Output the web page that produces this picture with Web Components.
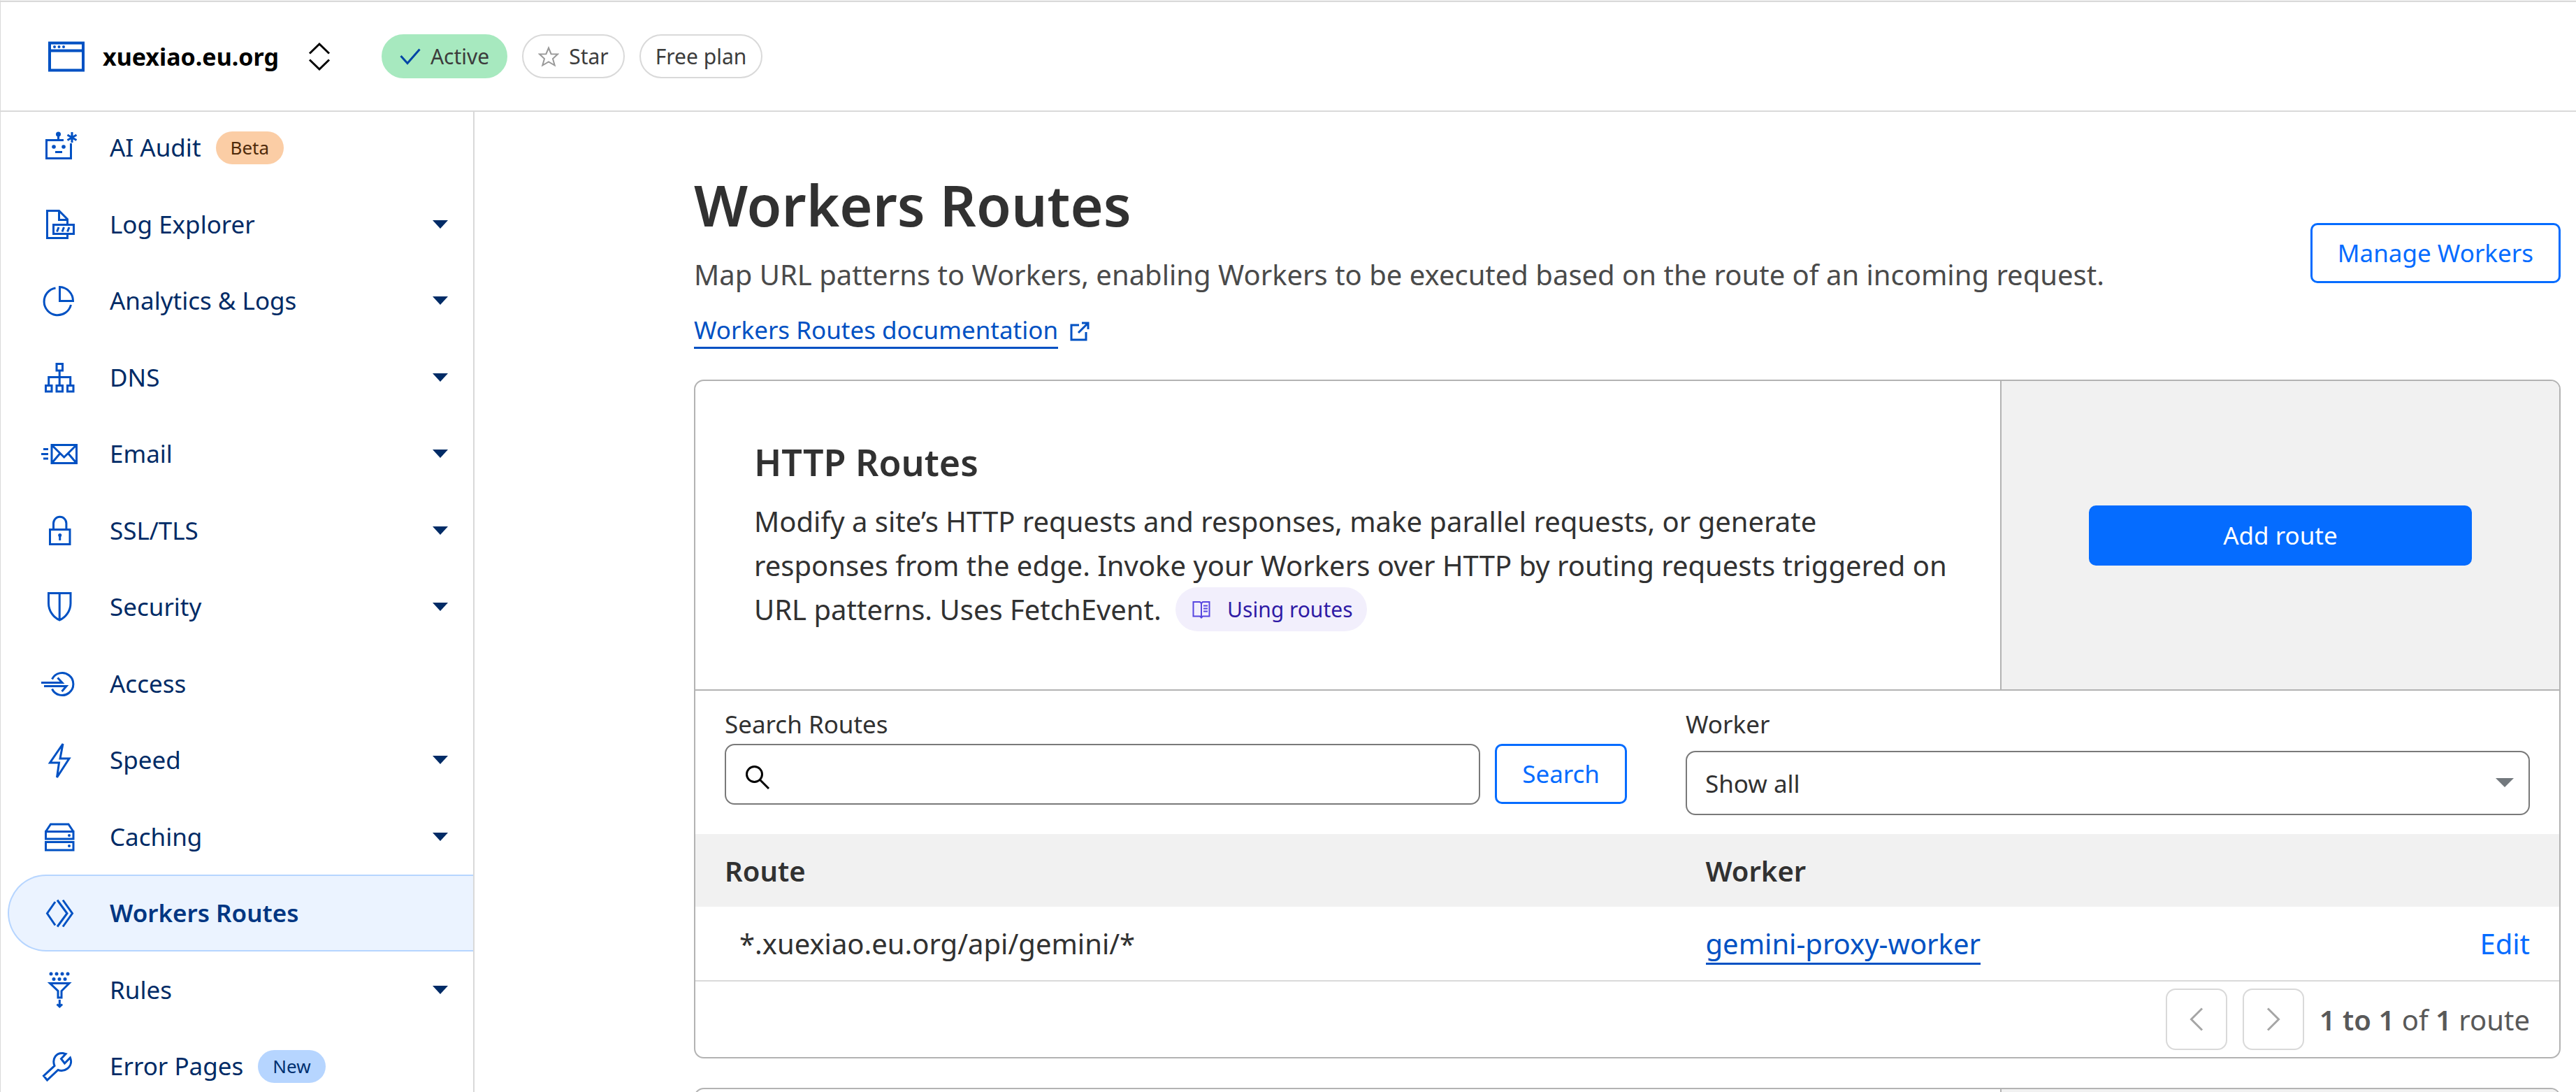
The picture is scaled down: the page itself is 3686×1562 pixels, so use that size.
<!DOCTYPE html>
<html lang="en">
<head>
<meta charset="utf-8">
<title>Workers Routes</title>
<style>
  html, body { margin: 0; height: 100%; }
  body {
    font-family: "Noto Sans", "Open Sans", sans-serif;
    font-size: 35px;
    color: #313131;
    background: #fff;
    overflow: hidden;
    --line: #d9d9d9;
    --card-line: #b3b3b3;
    --field-line: #797979;
    --fill: #f1f1f1;
    --link: #0051c3;
    --action: #056cff;
    --navy: #002b66;
  }
</style>
</head>
<body>
<dash-app>
  <site-header slot="header"></site-header>
  <side-nav slot="nav">
    <nav-item icon="robot">AI Audit<nav-badge slot="badge" tone="beta">Beta</nav-badge></nav-item>
    <nav-item icon="log" expandable>Log Explorer</nav-item>
    <nav-item icon="pie" expandable>Analytics &amp; Logs</nav-item>
    <nav-item icon="dns" expandable>DNS</nav-item>
    <nav-item icon="email" expandable>Email</nav-item>
    <nav-item icon="lock" expandable>SSL/TLS</nav-item>
    <nav-item icon="shield" expandable>Security</nav-item>
    <nav-item icon="access">Access</nav-item>
    <nav-item icon="bolt" expandable>Speed</nav-item>
    <nav-item icon="caching" expandable>Caching</nav-item>
    <nav-item icon="workers" active>Workers Routes</nav-item>
    <nav-item icon="rules" expandable>Rules</nav-item>
    <nav-item icon="wrench">Error Pages<nav-badge slot="badge" tone="new">New</nav-badge></nav-item>
  </side-nav>
  <page-heading>
    <span slot="title">Workers Routes</span>
    <span slot="text">Map URL patterns to Workers, enabling Workers to be executed based on the route of an incoming request.</span>
    <span slot="link">Workers Routes documentation</span>
    <action-button slot="action">Manage Workers</action-button>
  </page-heading>
  <route-card>
    <card-intro>
      <span slot="title">HTTP Routes</span>
      <span slot="text">Modify a site’s HTTP requests and responses, make parallel requests, or generate responses from the edge. Invoke your Workers over HTTP by routing requests triggered on URL patterns. Uses FetchEvent.</span>
      <doc-pill slot="doc">Using routes</doc-pill>
      <action-button slot="action" primary>Add route</action-button>
    </card-intro>
    <route-filters></route-filters>
    <route-table></route-table>
    <page-nav></page-nav>
  </route-card>
  <route-card>
    <card-intro></card-intro>
  </route-card>
</dash-app>

<script>
const ICONS = {
  robot: '<path d="M34 17.500H9.500V43.500H44.500V22M26.500 17V10M46 6v15M39.500 10l13 7.500M39.500 17.500l13-7.500M22 34.500h10"/><g fill="currentColor" stroke="none"><circle cx="26.500" cy="9" r="3.500"/><circle cx="20" cy="27" r="2.800"/><circle cx="34" cy="27" r="2.800"/></g>',
  log: '<path d="M39.500 27V20.500L27.500 8.500H10.500V47.500H39.500V42M27.500 8.500V21.500H39.500"/><path d="M19.500 28.500H48.500V41.500H19.500z"/><path d="M27 32l-2.500 6.500M34.500 32L32 38.500M42 32l-2.500 6.500"/>',
  pie: '<path d="M22.500 10A19.500 19.500 0 1 0 44.500 34"/><path d="M28.500 8.500A20 20 0 0 1 47.500 28.500H28.500z"/>',
  dns: '<path d="M24 8.500h8.500v9.500H24zM8.500 39.500H17V48H8.500zM24 39.500h8.500V48H24zM39.500 39.500H48V48H39.500zM28.200 18v21M12.700 39V27.500H43.700V39"/>',
  email: '<path d="M17 15.500H52.500V41.500H17zM17 15.500L34.700 33L52.500 15.500M17 41.500L29 27.500M52.500 41.500L40.500 27.500M5 21.500h7M2 28.500h10M5 35h7"/>',
  lock: '<path d="M14.500 26.500H43V47.500H14.500zM19.500 26V17.500a9.200 9.200 0 0 1 18.400 0V26M28.700 35v7"/><circle cx="28.700" cy="34.500" r="2.500" fill="currentColor" stroke="none"/>',
  shield: '<path d="M12.500 8.500H44V23C44 34 37 43 28.200 47C19.500 43 12.500 34 12.500 23zM28.200 8.500V47"/>',
  access: '<path d="M17.500 21.500A16 16 0 1 1 17.500 35.500"/><path d="M2 26.500H32L25.500 19.500M6 31.500H38L31.500 39"/>',
  bolt: '<path d="M33 5L29 26H42L24.500 53L27.500 32H14.500z"/>',
  caching: '<path d="M8.500 20.500H48V31H8.500zM8.500 20.500L15.500 10H41L48 20.500M8.500 35.500H48V47H8.500z"/><g fill="currentColor" stroke="none"><circle cx="42" cy="26" r="2"/><circle cx="42" cy="41" r="2"/></g>',
  workers: '<path d="M22 12L10.500 28.500L22 45.500M25 9.500L39 28.500L25 47.500M33 9.500L46.500 28.500L33 47.500"/>',
  rules: '<g fill="currentColor" stroke="none"><circle cx="16" cy="5" r="2.500"/><circle cx="24" cy="5" r="2.500"/><circle cx="32" cy="5" r="2.500"/><circle cx="40" cy="5" r="2.500"/><circle cx="20" cy="12.500" r="2.500"/><circle cx="28" cy="12.500" r="2.500"/><circle cx="36" cy="12.500" r="2.500"/></g><path d="M14.500 18.500H42L31 29.500V39H26V29.500zM28.300 42v9M24.500 48.500l3.800 3.500l3.800-3.500"/>',
  wrench: '<path d="M10.500 48L5.500 42L21 27.500C17 17 24 8.500 33 9.500L37 10.500L30.500 17.500L35.500 24L43.500 16C46 22 44 28 39.500 31.500C35.500 34.500 30 35 26 33.500z"/>'
};

function define(name, css, html, ready) {
  const template = document.createElement("template");
  customElements.define(name, class extends HTMLElement {
    constructor() {
      super();
      this.attachShadow({ mode: "open" });
    }
    connectedCallback() {
      if (this.shadowRoot.childNodes.length) return;
      template.innerHTML = `<style>*{box-sizing:border-box}a{text-decoration:none;color:inherit}button,input,select{font:inherit;margin:0}svg{display:block;fill:none;stroke:currentColor}${css}</style>${html}`;
      this.shadowRoot.append(template.content.cloneNode(true));
      if (ready) ready(this, this.shadowRoot);
    }
  });
}

define("dash-app", `
  :host { display: flex; flex-direction: column; height: 100vh; border-top: 1px solid #f4f4f4; border-left: 1px solid var(--line); box-sizing: border-box; overflow: hidden; }
  .body { display: flex; flex: 1; min-height: 0; }
  main { flex: 1; min-width: 0; padding: 64px 22px 0 314px; overflow: hidden; }
`, `
  <slot name="header"></slot>
  <div class="body"><slot name="nav"></slot><main><slot></slot></main></div>
`);

define("site-header", `
  :host { display: block; flex: none; border-top: 2px solid var(--line); border-bottom: 2px solid var(--line); }
  header { display: flex; align-items: center; height: 155px; padding: 0 68px; }
  .site { display: flex; align-items: center; gap: 26px; color: var(--link); }
  h2 { margin: 0; font-size: 34px; line-height: 48px; font-weight: 700; color: #000; }
  .switch { border: 0; padding: 0; background: none; color: #000; margin-left: 42px; }
  .pills { display: flex; gap: 21px; margin-left: 73px; }
  .check { color: #0045a6; }
  .star { color: #999; }
`, `
  <header>
    <div class="site">
      <svg width="52" height="44" viewBox="0 0 52 44" stroke-width="4"><path d="M2 2.500h48v39H2zM2 13.500h48"/><g fill="currentColor" stroke="none"><circle cx="9" cy="8" r="2"/><circle cx="15.500" cy="8" r="2"/><circle cx="22" cy="8" r="2"/></g></svg>
      <h2>xuexiao.eu.org</h2>
    </div>
    <button class="switch" aria-label="Switch site"><svg width="32" height="40" viewBox="0 0 32 40" stroke-width="3"><path d="M2 15.500L16 2L30 15.500M2 24.500L16 38L30 24.500"/></svg></button>
    <div class="pills">
      <status-pill tone="active"><svg slot="icon" class="check" width="30" height="24" viewBox="0 0 30 24" stroke-width="3"><path d="M1.500 11L11 21.500L28.500 1.500"/></svg>Active</status-pill>
      <status-pill><svg slot="icon" class="star" width="30" height="30" viewBox="0 0 30 30" stroke-width="2"><path d="M15 2.500l3.600 8.700l9.400.3l-7 6.500l2.700 9.500L15 22.500l-8.700 5l2.700-9.500l-7-6.500l9.400-.3z"/></svg>Star</status-pill>
      <status-pill>Free plan</status-pill>
    </div>
  </header>
`);

define("status-pill", `
  :host { display: flex; align-items: center; gap: 14px; height: 63px; padding: 0 21px; box-sizing: border-box; border: 2px solid var(--line); border-radius: 32px; font-size: 30px; line-height: 42px; color: #3c3c3c; }
  :host([tone=active]) { background: #a7e9bf; border-color: #a7e9bf; padding: 0 24px; }
`, `<slot name="icon"></slot><span><slot></slot></span>`);

define("side-nav", `
  :host { display: block; flex: none; width: 678px; box-sizing: border-box; border-right: 2px solid var(--line); overflow: hidden; }
  nav { display: flex; flex-direction: column; margin-top: -4px; }
  ::slotted(nav-item) { height: 109px; }
  ::slotted(nav-item:nth-child(odd)) { height: 110px; }
`, `<nav aria-label="Site"><slot></slot></nav>`);

define("nav-item", `
  :host { display: block; flex: none; color: var(--navy); padding-left: 10px; box-sizing: border-box; }
  a { display: flex; align-items: center; height: 100%; padding: 0 36px 0 44px; border: 2px solid transparent; border-right: 0; border-radius: 55px 0 0 55px; line-height: 48px; }
  .icon { color: var(--link); margin-right: 44px; }
  .arrow { margin-left: auto; fill: currentColor; stroke: none; }
  ::slotted(nav-badge) { margin-left: 21px; }
  :host([active]) { color: #003682; font-weight: 600; }
  :host([active]) a { background: #ebf3ff; border-color: #b6d5ff; }
`, `<a href="#"><svg class="icon" width="56" height="56" viewBox="0 0 56 56" stroke-width="3"></svg><span><slot></slot></span><slot name="badge"></slot></a>`,
(host, root) => {
  root.querySelector("svg").innerHTML = ICONS[host.getAttribute("icon")];
  if (host.hasAttribute("expandable")) {
    root.querySelector("a").insertAdjacentHTML("beforeend", '<svg class="arrow" width="22" height="12" viewBox="0 0 22 12"><path d="M0 0h22L11 12z"/></svg>');
  }
});

define("nav-badge", `
  :host { display: block; padding: 0 21px; border-radius: 24px; font-size: 26px; line-height: 47px; }
  :host([tone=beta]) { background: #fbcda5; color: #4f2a0a; }
  :host([tone=new]) { background: #b6d5ff; color: #003070; }
`, `<slot></slot>`);

define("action-button", `
  :host { display: block; }
  button { display: block; width: 100%; height: 86px; padding: 0 36px; border: 3px solid var(--action); border-radius: 10px; background: #fff; color: var(--action); font-size: 35px; line-height: 48px; white-space: nowrap; cursor: pointer; }
  :host([primary]) button { background: var(--action); color: #fff; }
`, `<button type="button"><slot></slot></button>`);

define("page-heading", `
  :host { display: block; margin-bottom: 44px; }
  header { display: flex; align-items: center; justify-content: space-between; }
  .copy { padding-top: 17px; }
  h1 { margin: 0; font-size: 81px; line-height: 104px; font-weight: 600; }
  p { margin: 16px 0 0; font-size: 40px; line-height: 63px; color: #4a4a4a; }
  .doc { display: flex; align-items: center; gap: 17px; margin-top: 24px; color: var(--link); width: max-content; }
  .doc span { line-height: 48px; border-bottom: 3px solid; }
`, `
  <header>
    <div class="copy">
      <h1><slot name="title"></slot></h1>
      <p><slot name="text"></slot></p>
      <a class="doc" href="#"><span><slot name="link"></slot></span><svg width="28" height="28" viewBox="0 0 28 28" stroke-width="3"><path d="M13 5H2V26H23V15M12 16L26 2M17 2H26V11"/></svg></a>
    </div>
    <slot name="action"></slot>
  </header>
`);

define("route-card", `
  :host { display: block; border: 2px solid var(--card-line); border-radius: 14px; margin-bottom: 42px; overflow: hidden; }
`, `<slot></slot>`);

define("card-intro", `
  :host { display: grid; grid-template-columns: 7fr 3fr; min-height: 443px; box-sizing: border-box; border-bottom: 2px solid var(--card-line); }
  .copy { padding: 83px 64px 83px 84px; }
  h3 { margin: 0; font-size: 52px; line-height: 66px; font-weight: 600; }
  p { margin: 20px 0 0; font-size: 40px; line-height: 63px; }
  .side { display: flex; align-items: center; padding: 0 125px; background: var(--fill); border-left: 2px solid var(--card-line); }
  ::slotted(action-button) { flex: 1; }
`, `
  <div class="copy"><h3><slot name="title"></slot></h3><p><slot name="text"></slot> <slot name="doc"></slot></p></div>
  <div class="side"><slot name="action"></slot></div>
`);

define("doc-pill", `
  :host { display: inline-block; vertical-align: bottom; margin-left: 10px; }
  a { display: flex; align-items: center; gap: 24px; height: 63px; padding: 0 20px 0 24px; border-radius: 32px; background: #f2effc; color: #2f1aa5; font-size: 30px; line-height: 42px; }
  svg { color: #5746e0; }
`, `<a href="#"><svg width="26" height="26" viewBox="0 0 26 26" stroke-width="2"><path d="M1.500 2H11L13 4L15 2H24.500V22.500H15L13 24.500L11 22.500H1.500zM13 4V24M16 7.500h6M16 11.500h6M16 15.500h6"/></svg><slot></slot></a>`);

define("route-filters", `
  :host { display: block; }
  form { display: grid; grid-template-columns: 1291fr 1208fr; gap: 84px; padding: 24px 42px 27px; }
  label { display: block; line-height: 48px; }
  .row { display: flex; gap: 21px; margin-top: 4px; }
  .box { position: relative; flex: 1; }
  input { display: block; width: 100%; height: 87px; padding: 0 24px 0 84px; border: 2px solid var(--field-line); border-radius: 14px; background: #fff; }
  .glass { position: absolute; left: 29px; top: 30px; color: #000; }
  .select { position: relative; margin-top: 14px; }
  select { display: block; width: 100%; height: 92px; padding: 0 26px; border: 2px solid var(--field-line); border-radius: 14px; background: #fff; color: inherit; appearance: none; }
  .caret { position: absolute; right: 23px; top: 39px; fill: #72787d; stroke: none; }
`, `
  <form>
    <div>
      <label for="q">Search Routes</label>
      <div class="row">
        <div class="box"><input id="q" type="text"><svg class="glass" width="36" height="36" viewBox="0 0 36 36" stroke-width="3"><circle cx="13.500" cy="13.500" r="11"/><path d="M21.500 21.500L34 34"/></svg></div>
        <action-button>Search</action-button>
      </div>
    </div>
    <div>
      <label for="w">Worker</label>
      <div class="select"><select id="w"><option>Show all</option></select><svg class="caret" width="26" height="13" viewBox="0 0 26 13"><path d="M0 0h26L13 13z"/></svg></div>
    </div>
  </form>
`);

define("route-table", `
  :host { display: block; font-size: 40px; }
  table { width: 100%; table-layout: fixed; border-spacing: 0; line-height: 63px; }
  th, td { text-align: left; padding: 0 32px; }
  th { height: 104px; background: var(--fill); font-weight: 600; }
  td { height: 107px; border-bottom: 2px solid var(--line); }
  .route { width: 53%; }
  th.route { padding-left: 42px; }
  td.route { padding-left: 63px; }
  .edit { width: 16%; text-align: right; padding-right: 42px; }
  td.edit a { color: var(--action); }
  .worker a { display: inline-block; color: var(--link); line-height: 54px; border-bottom: 3px solid; }
`, `
  <table>
    <thead><tr><th class="route">Route</th><th class="worker">Worker</th><th class="edit"></th></tr></thead>
    <tbody><tr><td class="route">*.xuexiao.eu.org/api/gemini/*</td><td class="worker"><a href="#">gemini-proxy-worker</a></td><td class="edit"><a href="#">Edit</a></td></tr></tbody>
  </table>
`);

define("page-nav", `
  :host { display: flex; align-items: center; justify-content: flex-end; gap: 22px; padding: 10px 42px; font-size: 40px; line-height: 63px; color: #595959; }
  button { display: grid; place-items: center; width: 88px; height: 88px; padding: 0; border: 2px solid var(--line); border-radius: 14px; background: #fff; color: #a6a6a6; }
  b { font-weight: 600; }
`, `
  <button type="button" aria-label="Previous page" disabled><svg width="20" height="34" viewBox="0 0 20 34" stroke-width="3"><path d="M18 1.500L2.500 17L18 32.500"/></svg></button>
  <button type="button" aria-label="Next page" disabled><svg width="20" height="34" viewBox="0 0 20 34" stroke-width="3"><path d="M2 1.500L17.500 17L2 32.500"/></svg></button>
  <span><b>1 to 1</b> of <b>1</b> route</span>
`);
</script>
</body>
</html>
